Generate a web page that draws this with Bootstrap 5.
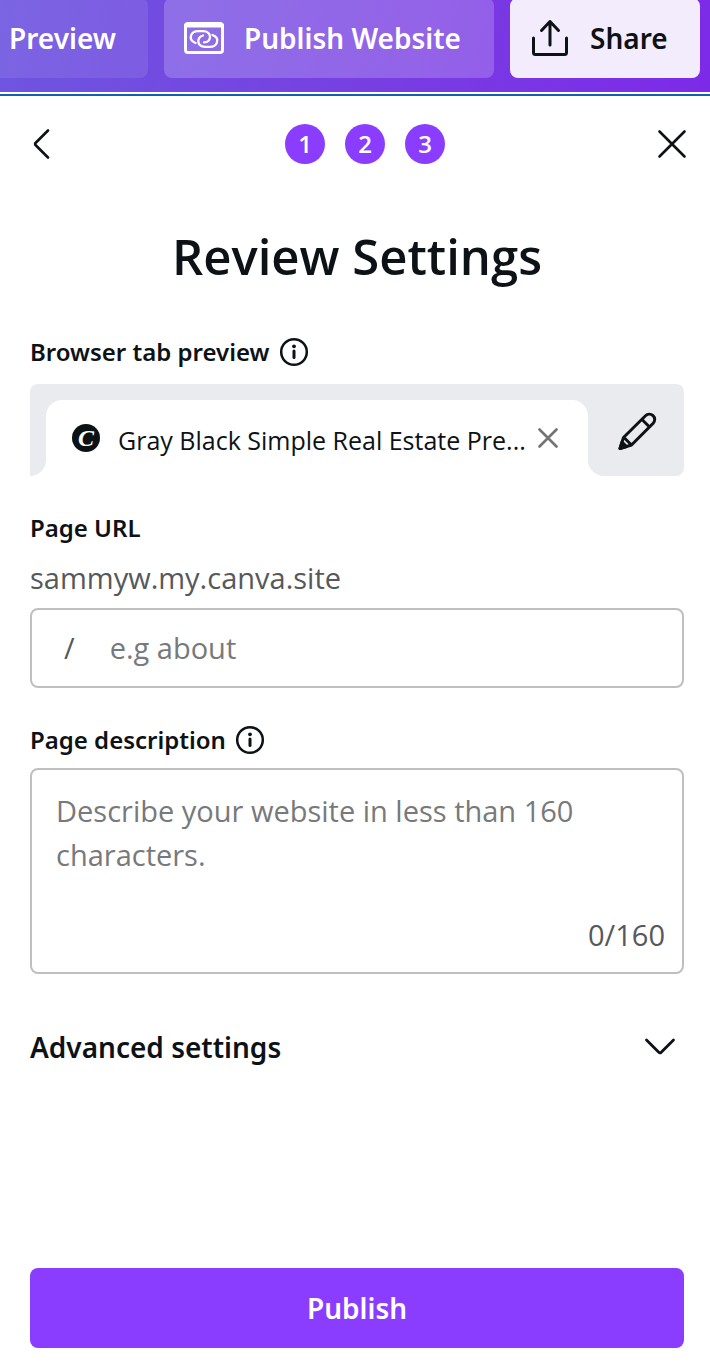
<!DOCTYPE html>
<html lang="en">
<head>
<meta charset="utf-8">
<meta name="viewport" content="width=device-width, initial-scale=1">
<title>Review Settings</title>
<link href="https://cdn.jsdelivr.net/npm/bootstrap@5.3.0/dist/css/bootstrap.min.css" rel="stylesheet">
<style>
  :root { --ink: #0d1216; --violet: #8b3dff; --line: #bfbfc1; --tab-gray: #eaebef; --strong: "Noto Sans", "Open Sans", sans-serif; }
  body { font-family: "Open Sans", "Noto Sans", sans-serif; color: var(--ink); background: #fff; font-size: 28px; line-height: 44px; }
  .topbar { background: linear-gradient(100deg, #6e56e0 0%, #7740e2 50%, #7d2ae8 100%); height: 92px; gap: 16px; padding-right: 10px; overflow: hidden; }
  .topbar .btn { height: 80px; margin-top: -2px; border: 0; border-radius: 8px; font-family: var(--strong); font-size: 28px; font-weight: 600; line-height: 44px; color: #fff; white-space: nowrap; flex-shrink: 0; padding: 0 32px 0 20px; }
  .topbar .btn-faint { background: rgba(255,255,255,.09); }
  .topbar .btn-soft { background: rgba(255,255,255,.2); min-width: 330px; }
  .topbar .btn-light-violet { background: #f2ecfc; color: var(--ink); min-width: 190px; }
  .rule-line { height: 2px; margin-top: 2px; background: #125fb8; }
  .panel { padding: 28px 26px 20px 30px; }
  .steps-row { margin: 0 -4px 0 -6px; height: 40px; }
  .bare { background: none; border: 0; padding: 0; color: inherit; }
  .back-btn { width: 50px; }
  .step { width: 40px; height: 40px; border-radius: 50%; background: var(--violet); color: #fff; font-size: 24px; font-weight: 600; }
  h1 { font-size: 49px; font-weight: 600; line-height: 64px; margin: 60px 0 48px; }
  .field-label { font-family: var(--strong); font-size: 24px; font-weight: 600; line-height: 32px; }
  .next-field { margin-top: 36px; }
  .tab-strip { height: 92px; margin-top: 16px; }
  .strip-start { width: 16px; background: var(--tab-gray); border-radius: 8px 0 16px 0; }
  .strip-mid { background: var(--tab-gray); padding-top: 16px; min-width: 0; }
  .browser-tab { height: 76px; background: #fff; border-radius: 16px 16px 0 0; padding: 0 30px 0 26px; }
  .tab-close { color: #727476; }
  .strip-end { width: 96px; padding: 4px 0 0 2px; color: var(--ink); background: var(--tab-gray); border-radius: 0 8px 8px 16px; }
  .tab-title { font-size: 25px; line-height: 32px; margin: 4px 12px 0 18px; }
  .favicon { width: 28px; height: 28px; border-radius: 50%; background: var(--ink); color: #fff; font: italic bold 24px/28px "Liberation Serif", serif; }
  .domain { font-size: 29px; color: #56585b; margin-top: 12px; }
  .field-box { border: 2px solid var(--line); border-radius: 8px; font-size: 29px; color: #56585b; }
  .field-box input, .field-box textarea { border: 0; outline: 0; background: none; padding: 0; min-width: 0; color: var(--ink); line-height: 44px; resize: none; }
  .field-box ::placeholder { color: #77797b; opacity: 1; }
  .url-box { height: 80px; margin-top: 8px; padding: 0 24px 0 32px; gap: 35px; }
  .desc-box { margin-top: 12px; padding: 19px 17px 15px 24px; }
  .desc-box textarea { height: 124px; }
  .advanced { font-family: var(--strong); font-weight: 600; margin-top: 51px; padding-right: 8px; }
  .publish { height: 80px; border: 0; border-radius: 8px; background: var(--violet); color: #fff; font-family: var(--strong); font-size: 28px; font-weight: 600; }
  svg { fill: none; stroke: currentColor; stroke-linecap: round; stroke-linejoin: round; flex-shrink: 0; display: block; }
</style>
</head>
<body class="min-vh-100 d-flex flex-column">
<header>
  <nav class="topbar d-flex justify-content-end" aria-label="Document actions">
    <button type="button" class="btn btn-faint">Preview</button>
    <button type="button" class="btn btn-soft d-flex align-items-center">
      <svg width="40" height="32" viewBox="0 0 40 32" aria-hidden="true">
        <rect x="1.5" y="1.5" width="37" height="29" rx="2.5" stroke-width="3"/>
        <path d="M2 3.500h36" stroke-width="4"/>
        <path d="M11.500 21C7.500 19.500 6 16.500 7.200 13.200 8.300 10.300 10.500 9.200 14 9.200h5C23.500 9.200 26.200 11.500 26 15 25.800 18.300 23.300 20.300 20 20.300" stroke-width="2.300"/>
        <path d="M28.500 13C32.500 14.500 34 17.500 32.800 20.800 31.700 23.700 29.500 24.800 26 24.800h-5C16.500 24.800 14.200 22.300 14.300 19 14.500 15.700 16.500 14.200 19 13.500" stroke-width="2.300"/>
      </svg>
      <span class="ms-3 ps-1">Publish Website</span>
    </button>
    <button type="button" class="btn btn-light-violet d-flex align-items-center">
      <svg width="40" height="40" viewBox="0 0 40 40" aria-hidden="true" stroke-width="3">
        <path d="M3.500 20v14.500a2 2 0 0 0 2 2h29a2 2 0 0 0 2-2V20M20 27V3.500M11.500 12.500l8.500-9 8.500 9"/>
      </svg>
      <span class="ms-3 ps-1">Share</span>
    </button>
  </nav>
  <div class="rule-line"></div>
</header>

<main class="panel flex-grow-1 d-flex flex-column">
  <div class="steps-row d-flex align-items-center justify-content-between">
    <button type="button" class="bare back-btn" aria-label="Back">
      <svg width="36" height="36" viewBox="0 0 36 36" stroke-width="2.600"><path d="M24 4.500 11.500 17a1.400 1.400 0 0 0 0 2L24 31.500"/></svg>
    </button>
    <div class="d-flex" style="gap:20px">
      <span class="step d-flex align-items-center justify-content-center">1</span>
      <span class="step d-flex align-items-center justify-content-center">2</span>
      <span class="step d-flex align-items-center justify-content-center">3</span>
    </div>
    <button type="button" class="bare" aria-label="Close">
      <svg width="32" height="32" viewBox="0 0 32 32" stroke-width="2.600"><path d="M3.500 3.500l25 25M28.500 3.500l-25 25"/></svg>
    </button>
  </div>

  <h1 class="text-center">Review Settings</h1>

  <div class="field-label d-flex align-items-center gap-2">
    <span>Browser tab preview</span>
    <svg width="32" height="32" viewBox="0 0 32 32" stroke-width="2.500" aria-hidden="true"><circle cx="16" cy="16" r="12.800"/><path d="M16 15v6.500" stroke-width="3"/><circle cx="16" cy="10.300" r="1.900" fill="currentColor" stroke="none"/></svg>
  </div>
  <div class="tab-strip d-flex">
    <div class="strip-start"></div>
    <div class="strip-mid flex-grow-1">
      <div class="browser-tab d-flex align-items-center">
        <span class="favicon text-center flex-shrink-0" aria-hidden="true">C</span>
        <span class="tab-title flex-grow-1 text-nowrap">Gray Black Simple Real Estate Pre...</span>
        <button type="button" class="bare tab-close" aria-label="Close tab">
          <svg width="20" height="20" viewBox="0 0 20 20" stroke-width="2.600"><path d="M1.500 1.500l17 17M18.500 1.500l-17 17"/></svg>
        </button>
      </div>
    </div>
    <button type="button" class="strip-end border-0 d-flex align-items-center justify-content-center" aria-label="Edit tab">
      <svg width="40" height="40" viewBox="0 0 40 40" stroke-width="3"><path d="M3 36.500l3.500-11L28.500 3.800a5.200 5.200 0 0 1 7.700 7.400L14.500 33zM25 7.500l7.500 7.500M7 25.500l7.500 7.500"/><path d="M3 36.500l2-6.500 4.500 4.500z" fill="currentColor"/></svg>
    </button>
  </div>

  <label class="field-label next-field" for="url">Page URL</label>
  <div class="domain">sammyw.my.canva.site</div>
  <div class="field-box url-box d-flex align-items-center">
    <span>/</span>
    <input id="url" type="text" class="flex-grow-1" placeholder="e.g about">
  </div>

  <div class="field-label next-field d-flex align-items-center gap-2">
    <label for="desc">Page description</label>
    <svg width="32" height="32" viewBox="0 0 32 32" stroke-width="2.500" aria-hidden="true"><circle cx="16" cy="16" r="12.800"/><path d="M16 15v6.500" stroke-width="3"/><circle cx="16" cy="10.300" r="1.900" fill="currentColor" stroke="none"/></svg>
  </div>
  <div class="field-box desc-box d-flex flex-column">
    <textarea id="desc" maxlength="160" placeholder="Describe your website in less than 160 characters."></textarea>
    <span class="text-end">0/160</span>
  </div>

  <button type="button" class="bare advanced d-flex align-items-center justify-content-between" aria-expanded="false">
    <span>Advanced settings</span>
    <svg width="32" height="32" viewBox="0 0 32 32" stroke-width="2.800"><path d="M2.500 9 15 21.500a1.400 1.400 0 0 0 2 0L29.500 9"/></svg>
  </button>

  <button type="button" class="publish w-100 mt-auto">Publish</button>
</main>
<script src="https://cdn.jsdelivr.net/npm/bootstrap@5.3.0/dist/js/bootstrap.bundle.min.js"></script>
</body>
</html>
